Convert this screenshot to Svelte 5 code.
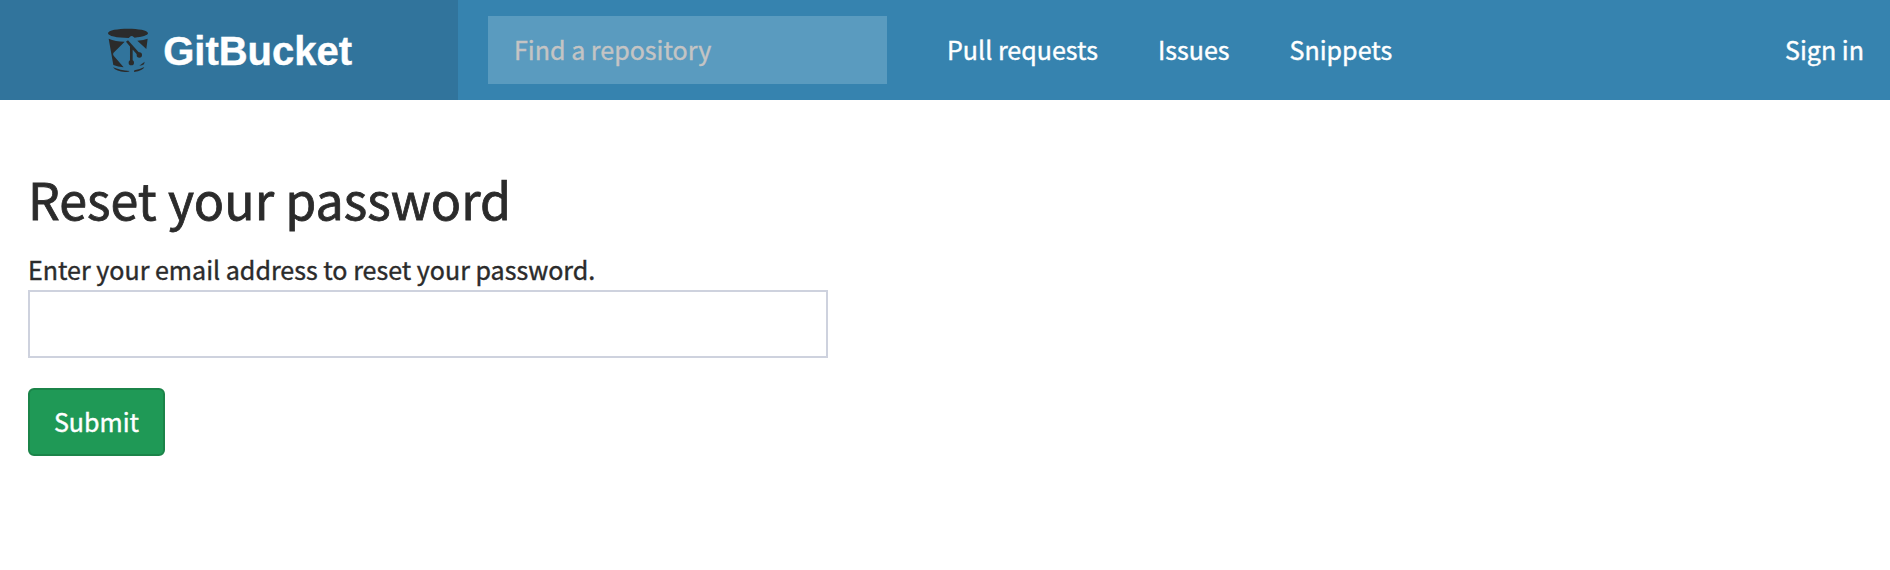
<script>
  const links = ['Pull requests', 'Issues', 'Snippets'];
</script>

<header>
  <a class="brand" href="#home">
    <svg viewBox="24 24 122 136" aria-hidden="true">
      <path d="M24 40C24 22 144 22 144 40C144 46 126 51 104 53L98 49Q95 47 92 49L86 54C50 54 24 48 24 40Z" />
      <path d="M26 56Q46 65 74 65L40 99Q38 103 41 107L71 142Q54 140 40 135Z" />
      <path d="M112 62Q132 60 143 56L139 87Z" />
      <path class="branch" d="M81 63L93 77L118 105M94 76V128" />
      <circle cx="94" cy="128" r="8" />
      <circle cx="118" cy="105" r="8" />
      <path d="M39 142Q60 151 89 153Q86 157 75 156Q49 155 39 142Z" />
      <path d="M103 151Q120 148 133 141Q129 152 102 156Z" />
      <path d="M118 137L134 125L132 133Q127 137 118 137Z" />
    </svg>
    <span>GitBucket</span>
  </a>
  <input class="search" type="text" placeholder="Find a repository" aria-label="Find a repository" />
  <nav>
    {#each links as link}
      <a href="#{link}">{link}</a>
    {/each}
  </nav>
  <a class="signin" href="#signin">Sign in</a>
</header>

<main>
  <h1>Reset your password</h1>
  <form onsubmit={(e) => e.preventDefault()}>
    <label for="email">Enter your email address to reset your password.</label>
    <input id="email" type="text" />
    <button type="submit">Submit</button>
  </form>
</main>

<style>
  :global(body) {
    margin: 0;
    background: #fff;
    color: #2b2b2b;
    font: 25.05px/40px "Noto Sans CJK SC", sans-serif;
    -webkit-text-stroke: 0.4px;
  }
  header {
    display: flex;
    align-items: center;
    height: 100px;
    background: #3683af;
  }
  a {
    color: #fff;
    text-decoration: none;
    white-space: nowrap;
  }
  input, button {
    box-sizing: border-box;
    height: 68px;
    margin: 0;
    font: inherit;
    border-radius: 0;
    -webkit-text-stroke: 0.4px;
  }
  .brand {
    display: flex;
    box-sizing: border-box;
    align-items: center;
    width: 458px;
    height: 100px;
    padding: 2px 0 0 108px;
    background: #31749c;
    font: bold 40px/60px "Liberation Sans", Arial, sans-serif;
  }
  .brand svg {
    width: 40.67px;
    height: 45.33px;
    margin-right: 14.5px;
    fill: #2b2b2b;
    stroke: none;
  }
  .branch {
    fill: none;
    stroke: #2b2b2b;
    stroke-width: 8;
  }
  .search {
    width: 399px;
    margin-left: 30px;
    padding: 0 26px 2px;
    border: 0;
    background: #5a9bbf;
    color: #fff;
  }
  .search::placeholder {
    color: #c4c4c4;
    opacity: 1;
  }
  nav {
    display: flex;
    gap: 60px;
    margin-left: 60px;
    padding-bottom: 2px;
  }
  .signin {
    margin-left: auto;
    padding: 0 26px 2px 0;
  }
  main {
    padding: 63px 28px 0;
  }
  h1 {
    margin: 0;
    font-size: 50.15px;
    font-weight: 400;
    line-height: 70px;
    -webkit-text-stroke: 0.8px;
  }
  form {
    display: flex;
    flex-direction: column;
    align-items: flex-start;
    margin-top: 16px;
  }
  label {
    padding-bottom: 1px;
  }
  #email {
    width: 800px;
    padding: 0 24px;
    border: 2px solid #ced2de;
    background: #fff;
  }
  button {
    width: 137px;
    margin-top: 30px;
    padding: 0 0 2px;
    border: 2px solid #1b8449;
    border-radius: 6px;
    background: #1f9956;
    color: #fff;
  }
</style>
